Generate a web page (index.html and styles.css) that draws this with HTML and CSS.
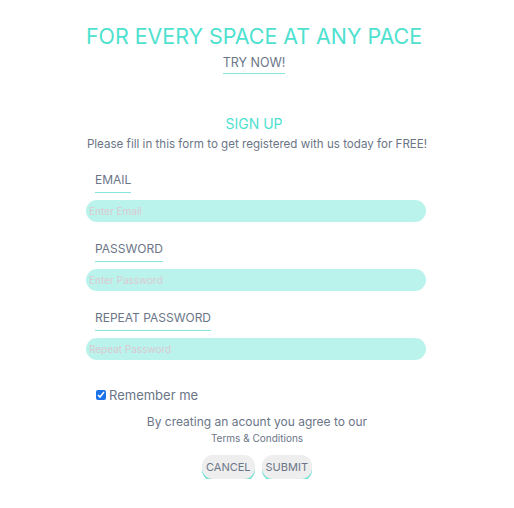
FILE: index.html
```html
<!DOCTYPE html>
<html>
<head>
<meta charset="utf-8">
<link rel="stylesheet" href="styles.css">
</head>
<body>
<main class="page">
  <header class="hero">
    <h1 class="hero-title">FOR EVERY SPACE AT ANY PACE</h1>
    <a class="hero-link" href="#">TRY NOW!</a>
  </header>
  <form class="signup">
    <h2 class="signup-title">SIGN UP</h2>
    <p class="signup-sub">Please fill in this form to get registered with us today for FREE!</p>
    <div class="field">
      <label class="field-label">EMAIL</label>
      <input class="field-input" type="text" placeholder="Enter Email">
    </div>
    <div class="field">
      <label class="field-label">PASSWORD</label>
      <input class="field-input" type="password" placeholder="Enter Password">
    </div>
    <div class="field">
      <label class="field-label">REPEAT PASSWORD</label>
      <input class="field-input" type="password" placeholder="Repeat Password">
    </div>
    <label class="remember"><input type="checkbox" checked class="remember-box"> Remember me</label>
    <p class="agree">By creating an acount you agree to our</p>
    <a class="terms" href="#">Terms &amp; Conditions</a>
    <div class="actions">
      <button type="button" class="btn">CANCEL</button>
      <button type="submit" class="btn">SUBMIT</button>
    </div>
  </form>
</main>
</body>
</html>
```
FILE: styles.css
```css
* { box-sizing: border-box; }
body {
  margin: 0;
  background: #fff;
  font-family: Inter, "Noto Sans", sans-serif;
  color: #6b7587;
}
.page {
  width: 340px;
  margin: 0 auto;
  padding-top: 22px;
  display: flex;
  flex-direction: column;
  align-items: center;
}
.hero {
  display: flex;
  flex-direction: column;
  align-items: center;
  margin-right: 6px;
}
.hero-title {
  margin: 0;
  font-size: 21.4px;
  font-weight: 400;
  color: #4ee1cf;
  line-height: 28px;
  white-space: nowrap;
}
.hero-link {
  margin-top: 4px;
  font-size: 12.5px;
  line-height: 18px;
  color: #6b7587;
  text-decoration: none;
  border-bottom: 1px solid #86e6dd;
  padding-bottom: 1px;
}
.signup {
  width: 100%;
  margin-top: 41px;
  display: flex;
  flex-direction: column;
  align-items: center;
}
.signup-title {
  margin: 0 6px 0 0;
  font-size: 14px;
  font-weight: 400;
  color: #4ee1cf;
  line-height: 18px;
}
.signup-sub {
  margin: 3px 0 0;
  font-size: 11.6px;
  line-height: 16px;
  white-space: nowrap;
}
.field {
  width: 100%;
  margin-top: 19px;
  display: flex;
  flex-direction: column;
}
.field:first-of-type { margin-top: 20px; }
.field-label {
  align-self: flex-start;
  margin-left: 8px;
  font-size: 12px;
  line-height: 16px;
  color: #6b7587;
  border-bottom: 1px solid #86e6dd;
  padding-bottom: 4px;
}
.field-input {
  margin-top: 7px;
  margin-left: -1px;
  width: 100%;
  height: 22px;
  border: none;
  border-radius: 11px;
  background: #baf3eb;
  padding: 0 3px;
  font-family: inherit;
  font-size: 10px;
  outline: none;
}
.field-input::placeholder { color: #dcc9d3; }
.remember {
  align-self: flex-start;
  margin-top: 27px;
  margin-left: 9px;
  font-size: 13px;
  line-height: 16px;
  display: flex;
  align-items: center;
  gap: 3px;
}
.remember-box {
  margin: 0;
  width: 10px;
  height: 10px;
  accent-color: #1a73e8;
}
.agree {
  margin: 11px 0 0;
  font-size: 12px;
  line-height: 16px;
}
.terms {
  margin-top: 1px;
  font-size: 10px;
  line-height: 14px;
  color: #6b7587;
  text-decoration: none;
}
.actions {
  margin-top: 10px;
  display: flex;
  gap: 7px;
}
.btn {
  font-family: inherit;
  font-size: 11px;
  color: #6b7587;
  background: #eeeeee;
  border: none;
  border-radius: 11px;
  height: 24px;
  padding: 0 4px;
  box-shadow: 0 2px 0 #6fe0d3;
}
```
